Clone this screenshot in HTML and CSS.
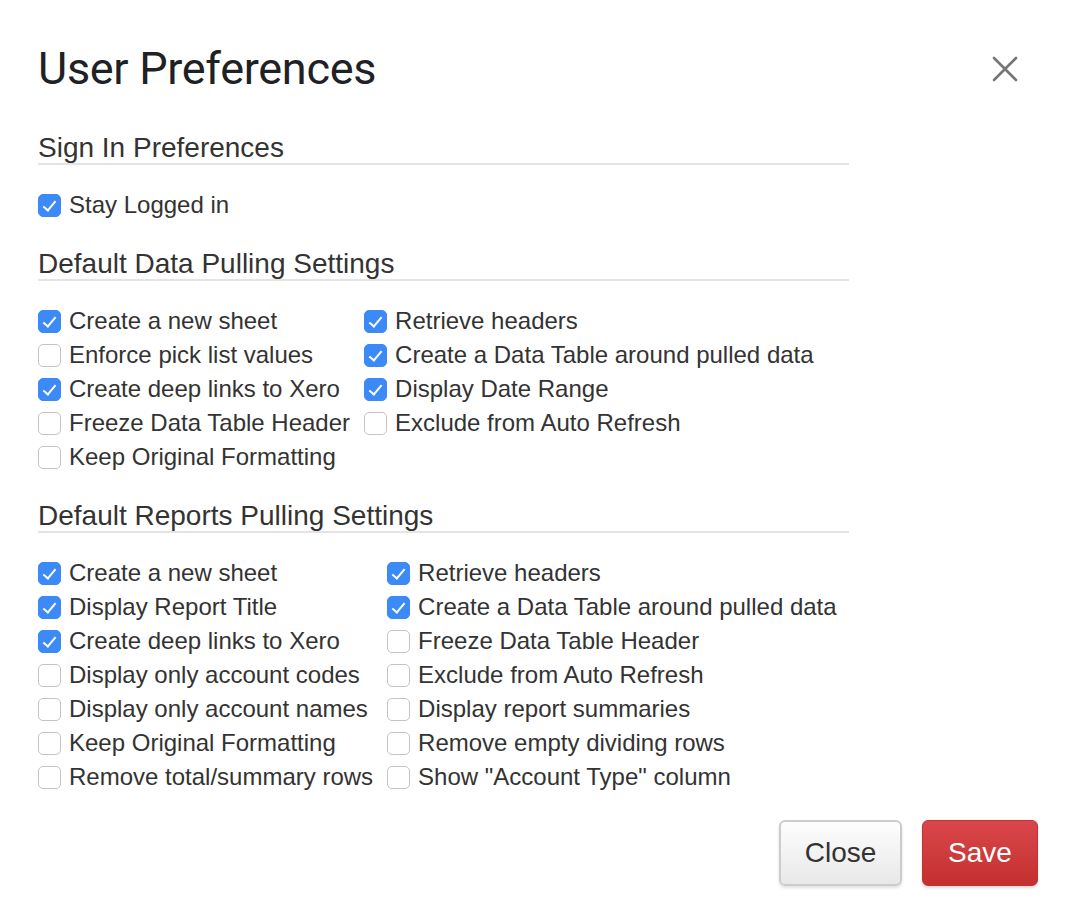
FILE: index.html
```html
<!DOCTYPE html>
<html>
<head>
<meta charset="utf-8">
<link rel="stylesheet" href="styles.css">
</head>
<body>
<div class="dialog">
  <header class="dialog-header">
    <h1 class="title">User Preferences</h1>
    <button class="close-x" aria-label="Close">
      <svg width="26" height="26" viewBox="0 0 26 26"><path d="M2 2 L24 24 M24 2 L2 24" stroke="#767676" stroke-width="2.6" stroke-linecap="round"/></svg>
    </button>
  </header>

  <section class="section">
    <h2 class="section-title">Sign In Preferences</h2>
    <div class="grid">
      <label class="opt"><span class="cb on"></span>Stay Logged in</label>
    </div>
  </section>

  <section class="section">
    <h2 class="section-title">Default Data Pulling Settings</h2>
    <div class="grid">
      <label class="opt"><span class="cb on"></span>Create a new sheet</label>
      <label class="opt"><span class="cb on"></span>Retrieve headers</label>
      <label class="opt"><span class="cb"></span>Enforce pick list values</label>
      <label class="opt"><span class="cb on"></span>Create a Data Table around pulled data</label>
      <label class="opt"><span class="cb on"></span>Create deep links to Xero</label>
      <label class="opt"><span class="cb on"></span>Display Date Range</label>
      <label class="opt"><span class="cb"></span>Freeze Data Table Header</label>
      <label class="opt"><span class="cb"></span>Exclude from Auto Refresh</label>
      <label class="opt"><span class="cb"></span>Keep Original Formatting</label>
    </div>
  </section>

  <section class="section">
    <h2 class="section-title">Default Reports Pulling Settings</h2>
    <div class="grid">
      <label class="opt"><span class="cb on"></span>Create a new sheet</label>
      <label class="opt"><span class="cb on"></span>Retrieve headers</label>
      <label class="opt"><span class="cb on"></span>Display Report Title</label>
      <label class="opt"><span class="cb on"></span>Create a Data Table around pulled data</label>
      <label class="opt"><span class="cb on"></span>Create deep links to Xero</label>
      <label class="opt"><span class="cb"></span>Freeze Data Table Header</label>
      <label class="opt"><span class="cb"></span>Display only account codes</label>
      <label class="opt"><span class="cb"></span>Exclude from Auto Refresh</label>
      <label class="opt"><span class="cb"></span>Display only account names</label>
      <label class="opt"><span class="cb"></span>Display report summaries</label>
      <label class="opt"><span class="cb"></span>Keep Original Formatting</label>
      <label class="opt"><span class="cb"></span>Remove empty dividing rows</label>
      <label class="opt"><span class="cb"></span>Remove total/summary rows</label>
      <label class="opt"><span class="cb"></span>Show "Account Type" column</label>
    </div>
  </section>

  <footer class="actions">
    <button class="btn btn-close">Close</button>
    <button class="btn btn-save">Save</button>
  </footer>
</div>
</body>
</html>
```

FILE: styles.css
```css
html, body {
  margin: 0;
  padding: 0;
  background: #ffffff;
}

body {
  font-family: "Liberation Sans", Arial, sans-serif;
  color: #333333;
}

.dialog {
  width: 1072px;
  height: 912px;
  box-sizing: border-box;
  padding: 40px 34px 0 38px;
}

.dialog-header {
  display: flex;
  align-items: center;
  justify-content: space-between;
  height: 58px;
  padding-right: 20px;
}

.title {
  margin: 0;
  font-family: Roboto, "Open Sans", sans-serif;
  font-weight: 400;
  font-size: 45px;
  line-height: 58px;
  color: #202124;
  letter-spacing: -0.3px;
}

.close-x {
  border: 0;
  background: none;
  padding: 0;
  width: 26px;
  height: 26px;
  display: flex;
  cursor: pointer;
}

.section {
  width: 811px;
}

.section-title {
  margin: 0;
  font-weight: 400;
  font-size: 28px;
  line-height: 30px;
  color: #333333;
  border-bottom: 2px solid #e4e4e4;
  padding-bottom: 0;
}

.section:first-of-type .section-title {
  margin-top: 35px;
}

.grid {
  display: grid;
  grid-template-columns: auto auto;
  justify-content: start;
  column-gap: 14px;
  padding-top: 23px;
  padding-bottom: 27px;
}

.section:last-of-type .grid {
  padding-bottom: 26px;
}

.opt {
  display: flex;
  align-items: center;
  height: 34px;
  font-size: 24px;
  color: #333333;
  white-space: nowrap;
}

.cb {
  flex: none;
  width: 23px;
  height: 23px;
  box-sizing: border-box;
  border-radius: 5px;
  border: 1.5px solid #c4c4c4;
  background: #ffffff;
  margin-right: 8px;
  position: relative;
}

.cb.on {
  background: #3c8af7;
  border-color: #3c8af7;
}

.cb.on::after {
  content: "";
  position: absolute;
  left: 7px;
  top: 3px;
  width: 5px;
  height: 11px;
  border: solid #ffffff;
  border-width: 0 2.5px 2.5px 0;
  transform: rotate(40deg);
}

.actions {
  display: flex;
  justify-content: flex-end;
  gap: 20px;
}

.btn {
  height: 66px;
  border-radius: 6px;
  font-family: "Liberation Sans", Arial, sans-serif;
  font-size: 28px;
  cursor: pointer;
}

.btn-close {
  width: 123px;
  color: #333333;
  border: 2px solid #cccccc;
  background: linear-gradient(#fdfdfd, #e8e8e8);
  box-shadow: 0 2px 3px rgba(0, 0, 0, 0.12);
}

.btn-save {
  width: 116px;
  color: #ffffff;
  border: 1px solid #c33234;
  background: linear-gradient(#d9474b, #c3302f);
  box-shadow: 0 2px 3px rgba(0, 0, 0, 0.15);
}
```
